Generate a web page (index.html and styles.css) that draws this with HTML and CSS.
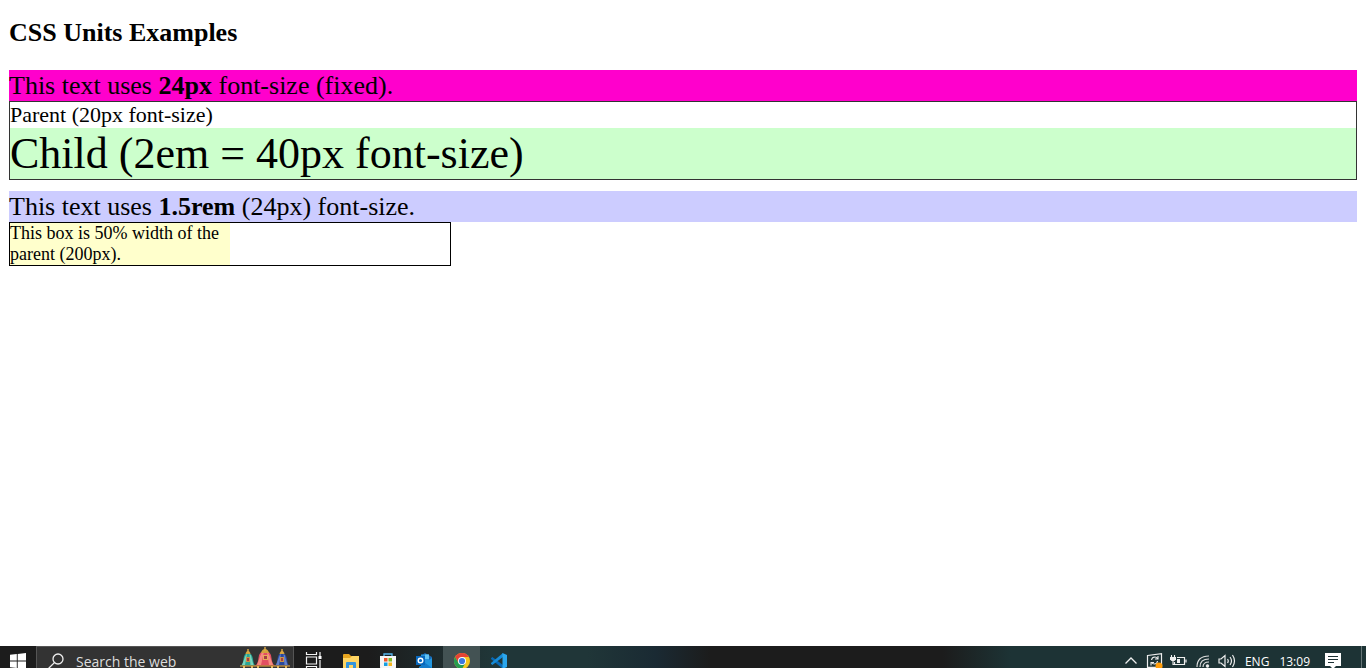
FILE: index.html
```html
<!DOCTYPE html>
<html lang="en">
<head>
<meta charset="utf-8">
<title>CSS Units Examples</title>
<link rel="stylesheet" href="styles.css">
</head>
<body>
<main class="content">
  <h2 class="title">CSS Units Examples</h2>
  <div class="px-box">This text uses <b>24px</b> font-size (fixed).</div>
  <div class="em-parent">Parent (20px font-size)
    <div class="em-child">Child (2em = 40px font-size)</div>
  </div>
  <div class="rem-box">This text uses <b>1.5rem</b> (24px) font-size.</div>
  <div class="percent-parent"><div class="percent-box">This box is 50% width of the parent (200px).</div></div>
</main>
<footer class="taskbar">
  <div class="row">
    <button class="start" aria-label="Start">
      <svg width="16" height="16" viewBox="0 0 16 16" fill="#fff"><path d="M0 1.8 6.8 1V7.4H0zM7.7.9 16 0V7.4H7.7zM0 8.4H6.8V15L0 14.2zM7.7 8.4H16V16L7.7 15.1z"/></svg>
    </button>
    <div class="search">
      <svg width="16" height="16" viewBox="0 0 16 16" fill="none" stroke="#eee" stroke-width="1.3"><circle cx="10" cy="6" r="5"/><path d="M6.4 9.6.7 15.3"/></svg>
      <input class="query" aria-label="Search the web" placeholder="Search the web">
      <svg width="54" height="28" viewBox="0 0 54 28">
        <path d="M3 19q3-1 3.500-7Q7 6 11 6t5 6q.5 6 3 7z" fill="#2aa594"/>
        <path d="M8 10q1-3 2-3L8 18H5zM12.500 7q2 1 2 4l2 7h-3z" fill="#7bd3bb"/>
        <path d="M37 19q3-1 3.500-7Q41 6 45 6t5 6q.5 6 3 7z" fill="#29489c"/>
        <path d="M42 10q1-3 2-3l-2 11h-3zM46.500 7q2 1 2 4l2 7h-3z" fill="#6480c9"/>
        <path d="M17 19q4-1 4.500-8Q22 4 28 4t6.500 7q.5 7 4.500 8z" fill="#e24f61"/>
        <path d="M24 7q1-2 3-2l-3 13h-4zM30 5q2 1 3 5l3 8h-4z" fill="#f68b80"/>
        <path d="M8.500 7Q9 4 11 4t2.500 3zM24 6q1-4 4-4t4 4zM42.500 7Q43 4 45 4t2.500 3z" fill="#d4a43d"/>
        <path d="M28 0v4M11 2v4M45 2v4" stroke="#dfac48" stroke-width="1.400"/>
        <path d="M9 10h4v5H9zM43 10h4v5h-4z" fill="#c99448"/><path d="M26 8h5v5h-5z" fill="#e8ad58"/>
        <path d="M10 11h2v3h-2zM44 11h2v3h-2zM27 9h3v3h-3z" fill="#a33d43"/>
        <path d="M3 19h50M0 23h54" stroke="#b5873a" stroke-width="1.600"/>
        <path d="M7 19v5M15 19v5M21 19v5M35 19v5M41 19v5M49 19v5" stroke="#e2b65a" stroke-width="2"/>
      </svg>
    </div>
    <div class="apps">
      <button class="app" aria-label="Task View">
        <svg width="17" height="18" viewBox="0 0 17 18" fill="none" stroke="#f4f4f4" stroke-width="1.200"><path d="M1.500 0v2.500h10V0M1.500 18v-3.500h10V18M1.500 5h10v7h-10zM15 0v4M15 8v10"/><path d="M13.500 4h3v3h-3z" fill="#fff" stroke="none"/></svg>
      </button>
      <button class="app" aria-label="File Explorer">
        <svg width="16" height="15" viewBox="0 0 16 15"><path d="M0 1q0-1 1-1h5l2 2h7q1 0 1 1v11H0z" fill="#e8a51f"/><path d="M0 4h7l2-2h7v12H0z" fill="#ffd563"/><path d="M3 15V9q0-1 1-1h8q1 0 1 1v6h-3v-4H6v4z" fill="#3595dc"/></svg>
      </button>
      <button class="app" aria-label="Microsoft Store">
        <svg width="16" height="16" viewBox="0 0 16 16"><path d="M4 4V1h8v3" fill="none" stroke="#55b6ed" stroke-width="1.300"/><path d="M0 3h16v11q0 2-2 2H2q-2 0-2-2z" fill="#f5f5f5"/><path d="M4 5h3.500v3.500H4z" fill="#ef5429"/><path d="M8.500 5H12v3.500H8.500z" fill="#7db928"/><path d="M4 9.500h3.500V13H4z" fill="#159ee0"/><path d="M8.500 9.500H12V13H8.500z" fill="#f5b51c"/></svg>
      </button>
      <button class="app" aria-label="Outlook">
        <svg width="17" height="16" viewBox="0 0 17 16"><path d="M3 4 9 0l7 4v6H3z" fill="#1769b5"/><path d="M5 1.500h8V10H5z" fill="#2693dc"/><path d="M9 1.500h4V6H9z" fill="#62c4f5"/><path d="M3 14 16 5v10H3z" fill="#2297df"/><path d="M8 9l8 6H3z" fill="#147bc9"/><path d="M0 3h9v9H0z" fill="#0868bd"/><circle cx="4.500" cy="7.500" r="2.300" fill="none" stroke="#fff" stroke-width="1.400"/></svg>
      </button>
      <button class="app active" aria-label="Google Chrome">
        <svg width="16" height="16" viewBox="0 0 16 16"><circle cx="8" cy="8" r="8" fill="#f4c51d"/><path d="M1.070 4A8 8 0 0 1 14.930 4H8L4.540 10z" fill="#e44335"/><path d="M1.070 4A8 8 0 0 0 8 16L11.460 10H4.540z" fill="#269c50"/><circle cx="8" cy="8" r="4" fill="#fff"/><circle cx="8" cy="8" r="3.100" fill="#3c79df"/></svg>
      </button>
      <button class="app" aria-label="Visual Studio Code">
        <svg width="16" height="16" viewBox="0 0 16 16"><path d="M0 5.200 1.300 4 12 12v4L0 6z" fill="#0869b5"/><path d="M0 10.800 1.300 12 12 4V0L0 10z" fill="#168bd7"/><path d="M11.500 0 16 2v12l-4.500 2z" fill="#2ba7ed"/></svg>
      </button>
    </div>
    <div class="tray">
      <button class="icon" aria-label="Show hidden icons"><svg width="12" height="8" viewBox="0 0 12 8" fill="none" stroke="#eee" stroke-width="1.300"><path d="M.5 6.500 6 1l5.500 5.500"/></svg></button>
      <button class="icon" aria-label="Update"><svg width="18" height="17" viewBox="0 0 18 17"><path d="M1.500 2.500 15.500.7v13.600h-14z" fill="none" stroke="#eee" stroke-width="1.200"/><path d="M5.500 7q.5-3 3.500-3 1.500 0 2.500 1.500M12 3v3H9M11.500 8q-.5 3-3 3-2 0-3-1.500M5 12.500v-3h3" fill="none" stroke="#eee" stroke-width="1.100"/><circle cx="13" cy="13" r="3.500" fill="#ff9d0a"/></svg></button>
      <button class="icon" aria-label="Battery"><svg width="17" height="12" viewBox="0 0 17 12"><path d="M7 2.500h7.500v7H4.500V7M16 4.500v3" fill="none" stroke="#eee" stroke-width="1.200"/><path d="M7 4h3v4H7z" fill="#eee"/><path d="M0 2h6v2.500L4.500 6h-3L0 4.500z" fill="#eee"/><path d="M1.500 0v2M4.500 0v2M3 6v3.500h2" fill="none" stroke="#eee" stroke-width="1.100"/></svg></button>
      <button class="icon" aria-label="Network"><svg width="14" height="14" viewBox="0 0 14 14" fill="none" stroke="#ddd" stroke-width="1.200"><path d="M1 13Q1 2 13 2M4 13q0-8 9-8M7 13q0-5 6-5"/><circle cx="11.500" cy="12" r="1.200" fill="#fff"/></svg></button>
      <button class="icon" aria-label="Volume"><svg width="18" height="14" viewBox="0 0 18 14" fill="none" stroke="#eee" stroke-width="1.200"><path d="M1 5h2l4-3.500v11L3 9H1zM9.500 5q1.500 2 0 4M12 3q3 4 0 8M14.500 1q4 6 0 12"/></svg></button>
      <span class="lang">ENG</span>
      <time class="clock">13:09</time>
      <button class="notice" aria-label="Notifications"><svg width="16" height="16" viewBox="0 0 16 16"><path d="M0 0h16v13h-5l-3 3-3-3H0z" fill="#fff"/><path d="M3 3.500h10M3 6.500h10M3 9.500h6" stroke="#1c3033" stroke-width="1.100"/></svg></button>
    </div>
  </div>
</footer>
</body>
</html>
```
FILE: styles.css
```css
* { box-sizing: border-box; }
body {
  margin: 0;
  min-height: 100vh;
  display: flex;
  flex-direction: column;
  background: #fff;
  color: #000;
  font-family: "Liberation Serif", "Times New Roman", serif;
}
.content { flex: 1; padding: 18px 9px; font-size: 18px; line-height: 21px; }
.title { margin: 0 0 22px; font-size: 26px; line-height: 30px; }
.px-box, .rem-box { font-size: 26px; line-height: 31px; }
.px-box { background: #ff00cc; }
.rem-box { background: #ccccff; }
.em-parent {
  margin-bottom: 11px;
  border: 1px solid #333;
  font-size: 22px;
  line-height: 26px;
}
.em-child { background: #ccffcc; font-size: 2em; line-height: 51px; }
.percent-parent { width: 442px; max-width: 100%; border: 1px solid #000; }
.percent-box { width: 50%; background: #ffffcc; }

.taskbar {
  height: 22px;
  overflow: hidden;
  background: linear-gradient(90deg, #1c1c1c 0, #1c1c1c 27%, #203638 36%, #203638 43%, #1a2a33 48%, #1c1c1c 52%, #1c1c1c 69%, #1d3335 74%, #1d3335 100%);
  color: #fff;
  font-family: "Open Sans", "Noto Sans", sans-serif;
}
.row { display: flex; height: 30px; }
button {
  display: flex;
  align-items: center;
  justify-content: center;
  padding: 0;
  border: 0;
  background: none;
}
svg { flex: none; }
.start { width: 36px; }
.search {
  display: flex;
  align-items: center;
  gap: 12px;
  width: 258px;
  padding: 0 2px 0 11px;
  border: 1px solid #555;
  background: #333;
}
.query {
  flex: 1;
  min-width: 0;
  padding: 0;
  border: 0;
  outline: 0;
  background: none;
  color: #ddd;
  font: 14px "Open Sans", "Noto Sans", sans-serif;
}
.query::placeholder { color: #ddd; opacity: 1; }
.apps { display: flex; padding-left: 1px; }
.app { width: 37px; }
.active { background: #435253; }
.tray { display: flex; align-items: center; margin-left: auto; padding-right: 4px; font-size: 12px; }
.icon { width: 24px; }
.lang { margin-left: 6px; }
.clock { margin-left: 10px; }
.notice { width: 52px; height: 30px; padding-right: 6px; border-right: 1px solid #667577; }
```
